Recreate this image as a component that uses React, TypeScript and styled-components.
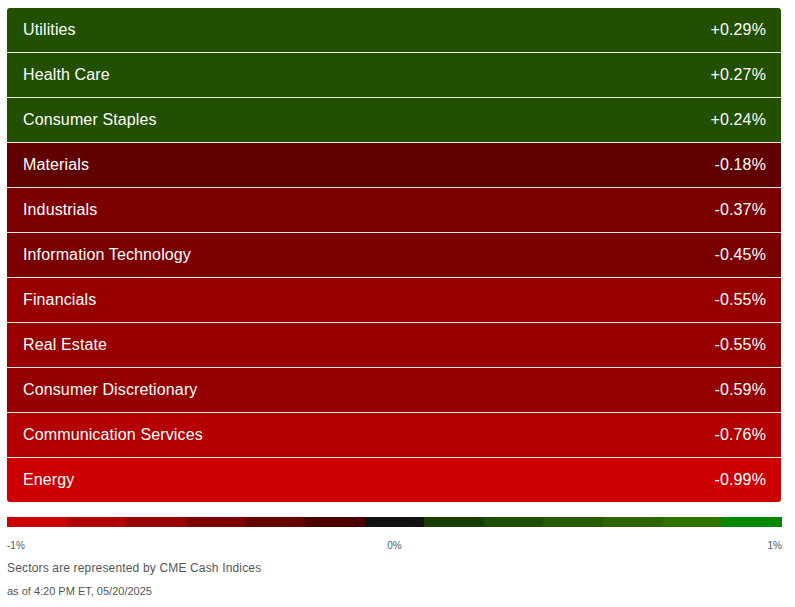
import React from 'react'
import styled, { createGlobalStyle } from 'styled-components'

const GlobalStyle = createGlobalStyle`
  body {
    margin: 0;
    background: #fff;
    font-family: "Liberation Sans", Arial, sans-serif;
  }
`

const Page = styled.div`
  padding: 8px 13px 0 7px;
  width: 775px;
`

const Table = styled.div`
  width: 774px;
  border-radius: 3px;
  overflow: hidden;
  display: flex;
  flex-direction: column;
`

const Row = styled.div<{ $bg: string }>`
  height: 44px;
  display: flex;
  align-items: center;
  justify-content: space-between;
  padding: 0 15px 0 16px;
  background: ${({ $bg }) => $bg};
  color: #fff;
  font-size: 16px;
  letter-spacing: 0.13px;
  & + & {
    border-top: 1px solid #eaeaea;
  }
`

const Legend = styled.div`
  margin-top: 15px;
  display: flex;
  height: 10px;
`

const Swatch = styled.div<{ $bg: string }>`
  flex: 1;
  background: ${({ $bg }) => $bg};
`

const Scale = styled.div`
  display: grid;
  grid-template-columns: 1fr auto 1fr;
  margin-top: 13px;
  font-size: 10px;
  color: #4f5b6b;
  line-height: 12px;
`

const ScaleMid = styled.span`
  text-align: center;
`

const ScaleEnd = styled.span`
  text-align: right;
`

const Note = styled.div`
  margin-top: 9px;
  font-size: 12px;
  letter-spacing: 0.16px;
  color: #555;
  line-height: 14px;
`

const Stamp = styled.div`
  margin-top: 10px;
  font-size: 11px;
  color: #555;
  line-height: 13px;
`

const sectors = [
  { name: 'Utilities', change: '+0.29%', bg: '#224f00' },
  { name: 'Health Care', change: '+0.27%', bg: '#224f00' },
  { name: 'Consumer Staples', change: '+0.24%', bg: '#224f00' },
  { name: 'Materials', change: '-0.18%', bg: '#600000' },
  { name: 'Industrials', change: '-0.37%', bg: '#7d0000' },
  { name: 'Information Technology', change: '-0.45%', bg: '#7b0000' },
  { name: 'Financials', change: '-0.55%', bg: '#990000' },
  { name: 'Real Estate', change: '-0.55%', bg: '#990000' },
  { name: 'Consumer Discretionary', change: '-0.59%', bg: '#950000' },
  { name: 'Communication Services', change: '-0.76%', bg: '#b30000' },
  { name: 'Energy', change: '-0.99%', bg: '#cc0000' },
]

const legend = [
  '#cc0000', '#b30000', '#990000', '#800000', '#660000', '#4d0000', '#111111',
  '#1a3d00', '#204d00', '#265c00', '#2d6600', '#337300', '#008800',
]

export default function App() {
  return (
    <>
      <GlobalStyle />
      <Page>
        <Table>
          {sectors.map(s => (
            <Row key={s.name} $bg={s.bg}>
              <span>{s.name}</span>
              <span>{s.change}</span>
            </Row>
          ))}
        </Table>
        <Legend>
          {legend.map(c => <Swatch key={c} $bg={c} />)}
        </Legend>
        <Scale>
          <span>-1%</span>
          <ScaleMid>0%</ScaleMid>
          <ScaleEnd>1%</ScaleEnd>
        </Scale>
        <Note>Sectors are represented by CME Cash Indices</Note>
        <Stamp>as of 4:20 PM ET, 05/20/2025</Stamp>
      </Page>
    </>
  )
}
